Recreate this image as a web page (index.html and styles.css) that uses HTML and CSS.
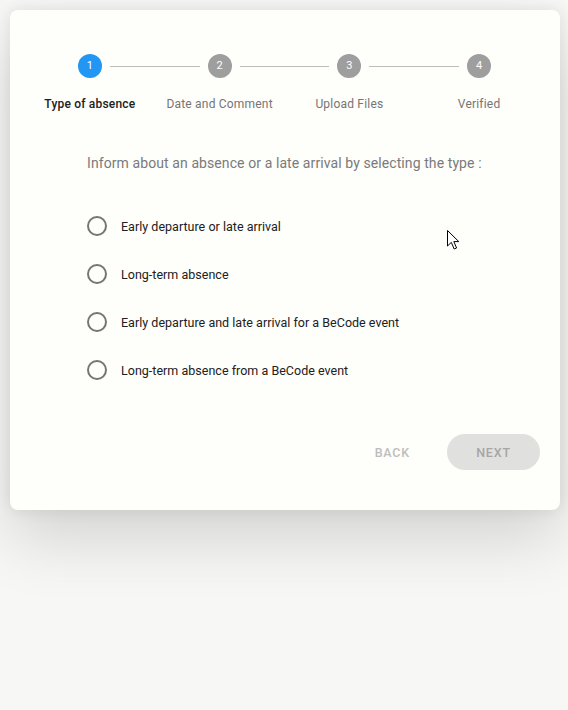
FILE: index.html
```html
<!DOCTYPE html>
<html lang="en">
<head>
<meta charset="utf-8">
<title>Absence</title>
<link rel="stylesheet" href="styles.css">
</head>
<body>
<div class="card">
  <div class="stepper">
    <div class="step active">
      <span class="dot">1</span>
      <span class="label">Type of absence</span>
    </div>
    <div class="step">
      <span class="line"></span>
      <span class="dot">2</span>
      <span class="label">Date and Comment</span>
    </div>
    <div class="step">
      <span class="line"></span>
      <span class="dot">3</span>
      <span class="label">Upload Files</span>
    </div>
    <div class="step">
      <span class="line"></span>
      <span class="dot">4</span>
      <span class="label">Verified</span>
    </div>
  </div>

  <div class="content">
    <p class="intro">Inform about an absence or a late arrival by selecting the type :</p>
    <div class="options">
      <label class="option"><span class="radio"></span><span>Early departure or late arrival</span></label>
      <label class="option"><span class="radio"></span><span>Long-term absence</span></label>
      <label class="option"><span class="radio"></span><span>Early departure and late arrival for a BeCode event</span></label>
      <label class="option"><span class="radio"></span><span>Long-term absence from a BeCode event</span></label>
    </div>
  </div>

  <div class="actions">
    <button class="btn back">Back</button>
    <button class="btn next">Next</button>
  </div>

  <svg class="cursor" width="14" height="21" viewBox="0 0 14 21">
    <path d="M0.5 0.5 L0.5 16 L4.3 12.4 L7.2 19 L9.6 18 L6.8 11.6 L11.8 11.6 Z" fill="#fff" stroke="#000" stroke-width="1" stroke-linejoin="miter"/>
  </svg>
</div>
</body>
</html>
```

FILE: styles.css
```css
* { box-sizing: border-box; }

html, body {
  margin: 0;
  padding: 0;
  height: 100%;
}

body {
  background: #f7f8f5;
  font-family: Roboto, "Liberation Sans", sans-serif;
  padding: 10px 8px 0 10px;
}

.card {
  position: relative;
  width: 550px;
  height: 500px;
  background: #fefefb;
  border-radius: 8px;
  box-shadow: 0 0 16px rgba(0, 0, 0, 0.09), 0 30px 64px rgba(0, 0, 0, 0.14);
  padding: 44px 16px 0 15px;
}

.stepper {
  display: flex;
}

.step {
  position: relative;
  flex: 1;
  display: flex;
  flex-direction: column;
  align-items: center;
}

.line {
  position: absolute;
  top: 12px;
  left: calc(-50% + 20px);
  right: calc(50% + 20px);
  border-top: 1px solid #bdbdbd;
}

.dot {
  width: 24px;
  height: 24px;
  border-radius: 50%;
  background: #9e9e9e;
  color: #fff;
  font-size: 11px;
  line-height: 24px;
  text-align: center;
}

.step.active .dot {
  background: #2196f3;
}

.label {
  margin-top: 19px;
  font-size: 12px;
  line-height: 14px;
  color: #757575;
  letter-spacing: 0.2px;
}

.step.active .label {
  color: #212121;
  font-weight: 500;
}

.content {
  padding: 0 0 0 62px;
}

.intro {
  margin: 42px 0 0;
  font-size: 14px;
  line-height: 20px;
  color: #7a7a7a;
  letter-spacing: 0.09px;
}

.options {
  display: flex;
  flex-direction: column;
  margin-top: 29px;
}

.option {
  display: flex;
  align-items: center;
  gap: 14px;
  height: 48px;
  font-size: 12.5px;
  color: #212121;
  letter-spacing: 0.02px;
}

.radio {
  width: 20px;
  height: 20px;
  border: 2px solid #757575;
  border-radius: 50%;
}

.actions {
  display: flex;
  justify-content: flex-end;
  align-items: center;
  gap: 21px;
  margin-top: 40px;
  padding-right: 4px;
}

.btn {
  font-family: Roboto, "Liberation Sans", sans-serif;
  font-size: 12.5px;
  font-weight: 500;
  letter-spacing: 0.8px;
  text-transform: uppercase;
  border: none;
  height: 36px;
  border-radius: 18px;
  padding: 0 16px;
  cursor: default;
}

.back {
  background: transparent;
  color: #bdbdbd;
  min-width: 64px;
}

.next {
  background: #e0e0de;
  color: #a6a6a6;
  width: 93px;
}

.cursor {
  position: absolute;
  left: 437px;
  top: 220px;
}
```
